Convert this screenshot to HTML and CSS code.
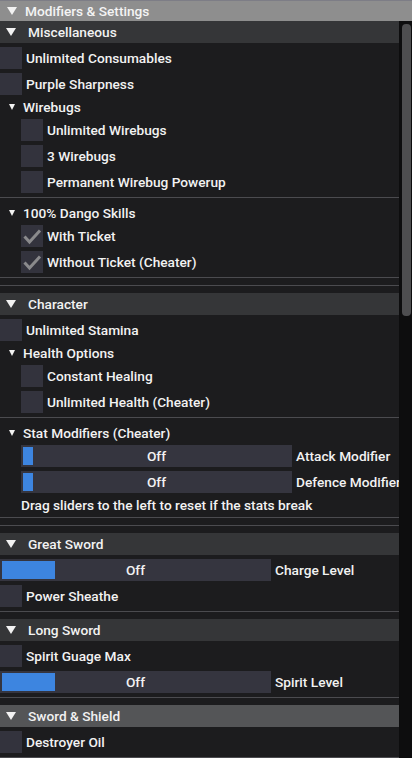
FILE: index.html
```html
<!DOCTYPE html>
<html>
<head>
<meta charset="utf-8">
<link rel="stylesheet" href="styles.css">
</head>
<body>
<div class="window">
  <div class="titlebar"><span class="tri tri-big"></span><span class="title-text">Modifiers &amp; Settings</span></div>
  <div class="body">
    <div class="content">
      <div class="header"><span class="tri tri-big"></span><span>Miscellaneous</span></div>
      <div class="cbrow"><span class="cb"></span><span>Unlimited Consumables</span></div>
      <div class="cbrow"><span class="cb"></span><span>Purple Sharpness</span></div>
      <div class="node"><span class="tri tri-small"></span><span>Wirebugs</span></div>
      <div class="indent">
        <div class="cbrow"><span class="cb"></span><span>Unlimited Wirebugs</span></div>
        <div class="cbrow"><span class="cb"></span><span>3 Wirebugs</span></div>
        <div class="cbrow"><span class="cb"></span><span>Permanent Wirebug Powerup</span></div>
      </div>
      <div class="sep"></div>
      <div class="node"><span class="tri tri-small"></span><span>100% Dango Skills</span></div>
      <div class="indent">
        <div class="cbrow"><span class="cb"><svg width="22" height="22" viewBox="0 0 22 22"><polyline points="3.5,11.5 8.5,17 19,5.5" fill="none" stroke="#8a8a8c" stroke-width="3"/></svg></span><span>With Ticket</span></div>
        <div class="cbrow"><span class="cb"><svg width="22" height="22" viewBox="0 0 22 22"><polyline points="3.5,11.5 8.5,17 19,5.5" fill="none" stroke="#8a8a8c" stroke-width="3"/></svg></span><span>Without Ticket (Cheater)</span></div>
      </div>
      <div class="sep"></div>
      <div class="sep"></div>

      <div class="header"><span class="tri tri-big"></span><span>Character</span></div>
      <div class="cbrow"><span class="cb"></span><span>Unlimited Stamina</span></div>
      <div class="node"><span class="tri tri-small"></span><span>Health Options</span></div>
      <div class="indent">
        <div class="cbrow"><span class="cb"></span><span>Constant Healing</span></div>
        <div class="cbrow"><span class="cb"></span><span>Unlimited Health (Cheater)</span></div>
      </div>
      <div class="sep"></div>
      <div class="node"><span class="tri tri-small"></span><span>Stat Modifiers (Cheater)</span></div>
      <div class="indent">
        <div class="slrow"><div class="slider"><span class="grab grab-thin"></span><span class="slval">Off</span></div><span class="sllabel">Attack Modifier</span></div>
        <div class="slrow"><div class="slider"><span class="grab grab-thin"></span><span class="slval">Off</span></div><span class="sllabel">Defence Modifier</span></div>
        <div class="textline">Drag sliders to the left to reset if the stats break</div>
      </div>
      <div class="sep"></div>
      <div class="sep"></div>

      <div class="header"><span class="tri tri-big"></span><span>Great Sword</span></div>
      <div class="slrow"><div class="slider"><span class="grab grab-wide"></span><span class="slval">Off</span></div><span class="sllabel">Charge Level</span></div>
      <div class="cbrow"><span class="cb"></span><span>Power Sheathe</span></div>
      <div class="sep"></div>

      <div class="header"><span class="tri tri-big"></span><span>Long Sword</span></div>
      <div class="cbrow"><span class="cb"></span><span>Spirit Guage Max</span></div>
      <div class="slrow"><div class="slider"><span class="grab grab-wide"></span><span class="slval">Off</span></div><span class="sllabel">Spirit Level</span></div>
      <div class="sep"></div>

      <div class="header hovered"><span class="tri tri-big"></span><span>Sword &amp; Shield</span></div>
      <div class="cbrow"><span class="cb"></span><span>Destroyer Oil</span></div>
      <div class="sep"></div>
    </div>
    <div class="scrollbar"><div class="thumb"></div></div>
  </div>
</div>
</body>
</html>
```
FILE: styles.css
```css
html, body {
  margin: 0;
  padding: 0;
  background: #1c1c1e;
  overflow: hidden;
}
body {
  font-family: Roboto, "Liberation Sans", sans-serif;
  font-size: 13.7px;
  font-weight: 500;
  color: #f2f2f2;
  width: 412px;
  height: 758px;
}
.window {
  width: 412px;
  height: 758px;
  display: flex;
  flex-direction: column;
}
.titlebar {
  height: 20px;
  border-top: 1px solid #7d7d86;
  background: #8e8e8e;
  display: flex;
  align-items: center;
  padding-left: 7px;
  gap: 8px;
  flex: none;
}
.title-text {
  color: #f4f4f4;
}
.body {
  flex: 1;
  display: flex;
  overflow: hidden;
}
.content {
  width: 399px;
  flex: none;
  display: flex;
  flex-direction: column;
  gap: 4px;
}
.scrollbar {
  width: 13px;
  flex: none;
  background: #0d0d0e;
  padding: 3px 1px 0 3px;
  box-sizing: border-box;
}
.thumb {
  width: 9px;
  height: 292px;
  background: #4e4e50;
  border-radius: 4px;
}
.tri {
  display: inline-block;
  width: 0;
  height: 0;
  flex: none;
}
.tri-big {
  border-left: 5px solid transparent;
  border-right: 5px solid transparent;
  border-top: 8px solid #f2f2f2;
}
.tri-small {
  border-left: 3.5px solid transparent;
  border-right: 3.5px solid transparent;
  border-top: 6px solid #f2f2f2;
}
.header {
  height: 22px;
  background: #353638;
  display: flex;
  align-items: center;
  padding-left: 6px;
  gap: 12px;
  flex: none;
}
.header.hovered {
  background: #545557;
}
.node {
  height: 16px;
  display: flex;
  align-items: center;
  padding-left: 9px;
  gap: 8px;
  flex: none;
}
.indent {
  padding-left: 21px;
  display: flex;
  flex-direction: column;
  gap: 4px;
}
.cbrow {
  height: 22px;
  display: flex;
  align-items: center;
  gap: 4px;
  flex: none;
}
.cb {
  width: 22px;
  height: 22px;
  background: #33333d;
  flex: none;
  display: block;
}
.cb svg {
  display: block;
}
.slrow {
  height: 22px;
  display: flex;
  align-items: center;
  gap: 4px;
  flex: none;
}
.slider {
  position: relative;
  width: 271px;
  height: 22px;
  background: #35353f;
  flex: none;
  display: flex;
  align-items: center;
  justify-content: center;
}
.grab {
  position: absolute;
  left: 2px;
  top: 2px;
  height: 18px;
  background: #3d85e0;
}
.grab-thin { width: 10px; }
.grab-wide { width: 53px; }
.slval {
  position: relative;
}
.sllabel {
  white-space: nowrap;
}
.textline {
  height: 16px;
  line-height: 16px;
  white-space: nowrap;
}
.sep {
  height: 1px;
  background: #4b4b4f;
  margin-bottom: 3px;
  flex: none;
}
```
